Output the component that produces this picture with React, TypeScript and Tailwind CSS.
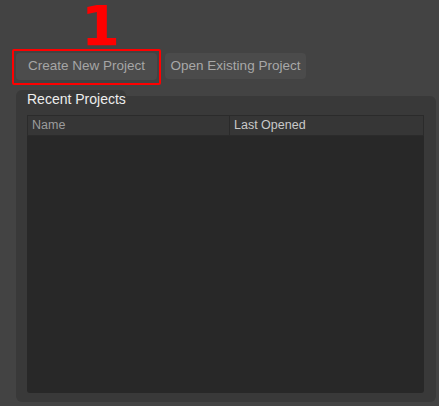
const columns = [
  { label: 'Name', width: 'w-[201px]', color: 'text-[#9c9c9c]' },
  { label: 'Last Opened', width: 'flex-1', color: 'text-[#c9c9c9]' },
]

const ProjectTable = () => {
  return (
    <div className="flex flex-col w-[397px]">
      <div className="flex h-[21px] bg-[#363636] border border-[#2b2b2b]">
        {columns.map((col, i) => (
          <div
            key={col.label}
            className={`${col.width} ${col.color} flex items-center px-[4px] text-[12.5px] ${
              i > 0 ? 'border-l border-[#2a2a2a]' : ''
            }`}
          >
            {col.label}
          </div>
        ))}
      </div>
      <div className="h-[257px] bg-[#282828] rounded-b-[3px]" />
    </div>
  )
}

export default function App() {
  return (
    <div
      className="w-[439px] h-[406px] bg-[#434343] overflow-hidden flex flex-col"
      style={{ fontFamily: '"Liberation Sans", Arial, sans-serif' }}
    >
      <div className="h-[49px] pl-[81px] flex items-end">
        <span
          className="block h-[49px] pt-[2px] text-[56px] leading-[47px] font-bold text-[#ff0000]"
          style={{ fontFamily: '"DejaVu Sans", sans-serif' }}
        >
          1
        </span>
      </div>

      <div className="flex items-start pl-[12px] gap-[4px]">
        <div className="border-2 border-[#ff0000] rounded-[2px] pt-[2px] pb-[3px] px-[2px]">
          <button className="w-[141px] h-[27px] bg-[#4c4c4c] rounded-[4px] text-[13.5px] text-[#a6a6a6]">
            Create New Project
          </button>
        </div>
        <button className="mt-[4px] w-[141px] h-[26px] bg-[#4b4b4b] rounded-[4px] text-[13.5px] text-[#a8a8a8]">
          Open Existing Project
        </button>
      </div>

      <div className="ml-[16px] mt-[5px] w-[420px] flex flex-col">
        <div className="h-[6px] w-[110px] rounded-t-[6px] bg-[#393939]" />
        <div className="bg-[#393939] rounded-tr-[6px] rounded-b-[6px] pl-[11px] pr-[12px] pb-[9px]">
          <div className="-mt-[5px] h-[17px] leading-[17px] text-[14px] font-medium text-[#ededed]">
            Recent Projects
          </div>
          <div className="mt-[7px]">
            <ProjectTable />
          </div>
        </div>
      </div>
    </div>
  )
}
